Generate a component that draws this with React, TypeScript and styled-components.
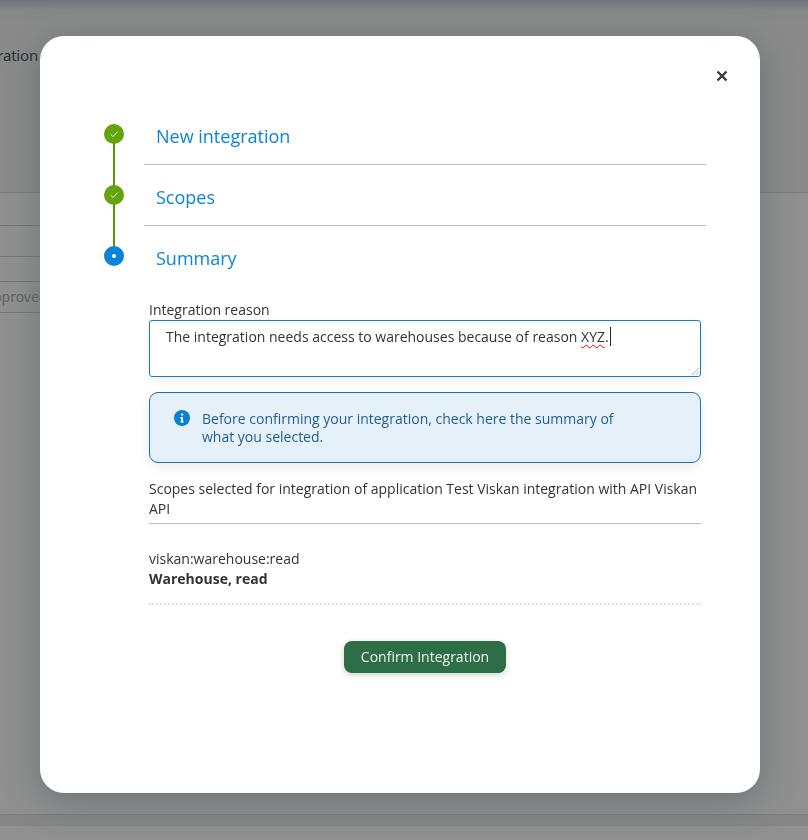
import React from 'react'
import styled, { createGlobalStyle } from 'styled-components'

const steps = [
  { title: 'New integration', done: true },
  { title: 'Scopes', done: true },
  { title: 'Summary', done: false },
]

const App = () => (
  <>
    <GlobalStyle />
    <BackPage>
      <BackTitle>Application integration</BackTitle>
      <BackTable>
        <BackRow />
        <BackRow $height={25} />
        <BackRow><BackCell>Approved</BackCell></BackRow>
        <BackRow />
      </BackTable>
      <BackFooter />
    </BackPage>
    <Overlay>
      <Modal>
        <CloseButton aria-label='Close'>
          <svg width='12' height='12' viewBox='0 0 12 12'>
            <path d='M1.5 1.5 L10.5 10.5 M10.5 1.5 L1.5 10.5' stroke='#3a3a3a' strokeWidth='2.4' />
          </svg>
        </CloseButton>
        <Stepper>
          {steps.map((step, i) => (
            <StepHeader key={step.title} $last={i === steps.length - 1}>
              <StepIcon $done={step.done}>
                {step.done ? (
                  <svg width='10' height='10' viewBox='0 0 10 10'>
                    <path d='M1.5 5.2 L4 7.6 L8.6 2.6' fill='none' stroke='#e8f2d8' strokeWidth='1' />
                  </svg>
                ) : (
                  <StepDot />
                )}
              </StepIcon>
              <StepTitle $last={i === steps.length - 1}>{step.title}</StepTitle>
            </StepHeader>
          ))}
        </Stepper>
        <Content>
          <FieldLabel htmlFor='reason'>Integration reason</FieldLabel>
          <ReasonBox id='reason'>
            The integration needs access to warehouses because of reason <Misspelled>XYZ</Misspelled>.<Caret />
            <ResizeGrip width='9' height='9' viewBox='0 0 9 9'>
              <path d='M8 1 L1 8 M8 4.5 L4.5 8' stroke='#b5b5b5' strokeWidth='1' />
            </ResizeGrip>
          </ReasonBox>
          <InfoBox>
            <InfoIcon width='16' height='16' viewBox='0 0 16 16'>
              <circle cx='8' cy='8' r='8' fill='#0b7fd1' />
              <rect x='7' y='3.4' width='2.2' height='2.1' rx='0.6' fill='#fff' />
              <path d='M6.4 7 H9 V11.2 H9.8 V12.6 H6.4 V11.2 H7.2 V8.4 H6.4 Z' fill='#fff' />
            </InfoIcon>
            <InfoText>Before confirming your integration, check here the summary of what you selected.</InfoText>
          </InfoBox>
          <ScopesIntro>Scopes selected for integration of application Test Viskan integration with API Viskan API</ScopesIntro>
          <ScopeItem>
            <div>viskan:warehouse:read</div>
            <ScopeTitle>Warehouse, read</ScopeTitle>
          </ScopeItem>
          <Actions>
            <ConfirmButton>Confirm Integration</ConfirmButton>
          </Actions>
        </Content>
      </Modal>
    </Overlay>
  </>
)

const GlobalStyle = createGlobalStyle`
  html, body {
    margin: 0;
    height: 100%;
    overflow: hidden;
    background: #8f908f;
    font-family: "Open Sans", "Noto Sans", sans-serif;
  }
`

const BackPage = styled.div`
  height: 840px;
  display: flex;
  flex-direction: column;
  background: #8f908f;
`

const BackTitle = styled.div`
  height: 193px;
  flex: none;
  box-sizing: border-box;
  display: flex;
  justify-content: flex-end;
  padding: 45px calc(100% - 38px) 0 0;
  font: 15px/20px "Noto Sans", sans-serif;
  letter-spacing: -0.2px;
  color: #2b2f33;
  white-space: nowrap;
  background: linear-gradient(#70757a 0, #84878a 10px, #898a89 22px);
  border-bottom: 1px solid #7a7b7a;
`

const BackTable = styled.div`
  padding-top: 32px;
  width: 400px;
  height: 621px;
  flex: none;
  box-sizing: border-box;
`

const BackRow = styled.div<{ $height?: number }>`
  height: ${({ $height }) => $height ?? 31}px;
  box-sizing: border-box;
  border-top: 1px solid #757675;
`

const BackCell = styled.div`
  margin-left: -16px;
  padding-top: 5px;
  font: 14px/20px "Noto Sans", sans-serif;
  color: #626362;
`

const BackFooter = styled.div`
  height: 12px;
  flex: none;
  box-sizing: border-box;
  background: #858685;
  border-top: 1px solid #7a7b7a;
`

const Overlay = styled.div`
  position: fixed;
  inset: 0 8px 0 0;
  display: flex;
  align-items: flex-start;
  justify-content: center;
`

const Modal = styled.div`
  position: relative;
  width: 720px;
  height: 757px;
  margin-top: 36px;
  box-sizing: border-box;
  padding: 68px 54px 0 64px;
  background: #fff;
  border-radius: 24px;
  box-shadow: 0 8px 32px rgba(75, 90, 100, 0.5);
`

const CloseButton = styled.button`
  position: absolute;
  top: 34px;
  right: 32px;
  width: 12px;
  height: 12px;
  padding: 0;
  border: 0;
  background: none;
  display: flex;
`

const Stepper = styled.div`
  display: flex;
  flex-direction: column;
`

const StepHeader = styled.div<{ $last: boolean }>`
  position: relative;
  display: flex;
  height: 61px;

  &::before {
    content: '';
    display: ${({ $last }) => ($last ? 'none' : 'block')};
    position: absolute;
    left: 9px;
    top: 30px;
    width: 2px;
    height: 61px;
    background: #5a950a;
  }
`

const StepIcon = styled.div<{ $done: boolean }>`
  position: relative;
  width: 20px;
  height: 20px;
  margin-top: 20px;
  flex: none;
  border-radius: 50%;
  background: ${({ $done }) => ($done ? '#64a30d' : '#0b84d8')};
  display: flex;
  align-items: center;
  justify-content: center;
`

const StepDot = styled.span`
  width: 4px;
  height: 4px;
  border-radius: 50%;
  background: #fff;
`

const StepTitle = styled.div<{ $last: boolean }>`
  flex: 1;
  margin-left: 20px;
  padding: 20px 0 0 12px;
  font-size: 18px;
  line-height: 25px;
  color: #0b84d8;
  border-bottom: ${({ $last }) => ($last ? '0' : '1px solid #bdbdbd')};
`

const Content = styled.div`
  display: flex;
  flex-direction: column;
  width: 552px;
  margin: 13px 0 0 45px;
  font-size: 14px;
  line-height: 20px;
  color: #333;
`

const FieldLabel = styled.label`
  display: block;
  line-height: 20px;
`

const ReasonBox = styled.div`
  position: relative;
  height: 57px;
  box-sizing: border-box;
  padding: 6px 16px;
  border: 1px solid #1b7cc4;
  border-radius: 3px;
  box-shadow: 0 4px 12px rgba(0, 0, 0, 0.06);
`

const Misspelled = styled.span`
  text-decoration: underline wavy #f00000 1px;
  text-underline-offset: 2px;
`

const Caret = styled.span`
  display: inline-block;
  width: 1px;
  height: 19px;
  margin-left: 1px;
  vertical-align: -4px;
  background: #222;
`

const ResizeGrip = styled.svg`
  position: absolute;
  right: 0;
  bottom: 0;
`

const InfoBox = styled.div`
  display: flex;
  align-items: flex-start;
  gap: 12px;
  height: 71px;
  box-sizing: border-box;
  margin-top: 15px;
  padding: 17px 80px 0 24px;
  background: #e6f0f8;
  border: 1px solid #1b72b4;
  border-radius: 9px;
  box-shadow: 0 4px 12px rgba(0, 0, 0, 0.08);
`

const InfoIcon = styled.svg`
  flex: none;
`

const InfoText = styled.div`
  line-height: 18px;
  color: #1d5f91;
`

const ScopesIntro = styled.div`
  margin-top: 16px;
  padding-bottom: 4px;
  border-bottom: 1px solid #bdbdbd;
`

const ScopeItem = styled.div`
  padding: 25px 0 14px;
  border-bottom: 2px dotted #e0e0e0;
`

const ScopeTitle = styled.div`
  font-weight: 700;
`

const Actions = styled.div`
  display: flex;
  justify-content: center;
  margin-top: 36px;
`

const ConfirmButton = styled.button`
  width: 162px;
  height: 32px;
  padding: 0;
  border: 0;
  border-radius: 8px;
  background: #2d6e46;
  color: #eef3ef;
  font: 14px/20px "Open Sans", "Noto Sans", sans-serif;
  box-shadow: 0 2px 6px rgba(0, 0, 0, 0.18);
`

export default App
